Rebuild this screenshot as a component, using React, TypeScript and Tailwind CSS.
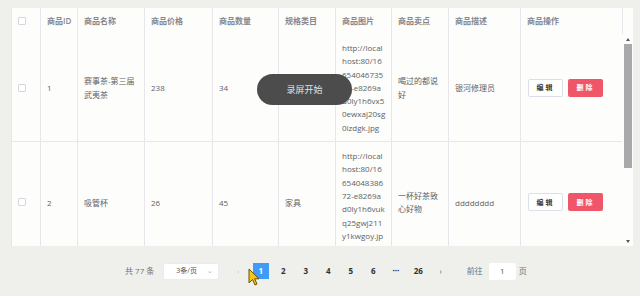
const font = { fontFamily: '"Open Sans", "Noto Sans CJK SC", sans-serif' }

const headers = ['商品ID', '商品名称', '商品价格', '商品数量', '规格类目', '商品图片', '商品卖点', '商品描述', '商品操作']

const rows = [
  {
    id: '1',
    name: ['赛事茶-第三届', '武夷茶'],
    price: '238',
    qty: '34',
    cat: '茶叶',
    img: ['http://local', 'host:80/16', '654046735', '01-e8269a', 'd0ly1h6vx5', '0ewxaj20sg', '0izdgk.jpg'],
    sell: ['喝过的都说', '好'],
    desc: '银河修理员',
  },
  {
    id: '2',
    name: ['吸管杯'],
    price: '26',
    qty: '45',
    cat: '家具',
    img: ['http://local', 'host:80/16', '654048386', '72-e8269a', 'd0ly1h6vuk', 'q25gwj211', 'y1kwgoy.jp', 'g'],
    sell: ['一杯好茶致', '心好物'],
    desc: 'dddddddd',
  },
]

function Checkbox() {
  return <span className="block w-[8px] h-[8px] border border-[#d6d8e0] rounded-[1px] bg-white" />
}

function Lines({ lines }: { lines: string[] }) {
  return (
    <div>
      {lines.map((l, i) => (
        <div key={i} className="whitespace-nowrap">{l}</div>
      ))}
    </div>
  )
}

const cell = 'flex items-center border-r border-[#e6e6ec] pl-[6px]'

export default function App() {
  const pages = ['1', '2', '3', '4', '5', '6', '···', '26']
  return (
    <div className="relative w-[640px] h-[296px] bg-[#efefec] overflow-hidden text-[8px] text-[#606266]" style={font}>
      {/* Table card */}
      <div className="ml-[11px] mr-[7px] mt-[8px] bg-[#fdfdfb] border-l border-[#e6e6ec]">
        {/* Header */}
        <div className="grid grid-cols-[29px_37px_67px_68px_66px_57px_56px_57px_72px_102px_11px] h-[26px] text-[#86888e] font-semibold">
          <div className={cell}><Checkbox /></div>
          {headers.map((h, i) => (
            <div key={h} className={`${cell} ${i === 0 ? 'pl-[4px]' : ''}`}>{h}</div>
          ))}
          <div />
        </div>

        {/* Body */}
        <div className="flex h-[212px]">
          <div className="w-[611px] overflow-hidden leading-[13.3px]">
            {rows.map((r) => (
              <div key={r.id} className="grid grid-cols-[29px_37px_67px_68px_66px_57px_56px_57px_72px_102px] border-b border-[#e6e6ec]">
                <div className={cell}><Checkbox /></div>
                <div className={`${cell} pl-[4px]`}>{r.id}</div>
                <div className={cell}><Lines lines={r.name} /></div>
                <div className={cell}>{r.price}</div>
                <div className={cell}>{r.qty}</div>
                <div className={cell}>{r.cat}</div>
                <div className={`${cell} py-[7px]`}><Lines lines={r.img} /></div>
                <div className={cell}><Lines lines={r.sell} /></div>
                <div className={cell}>{r.desc}</div>
                <div className={`${cell} gap-[5px] pl-[7px]`}>
                  <button className="w-[35px] h-[18px] border border-[#dcdfe6] rounded-[2px] bg-white text-[7px] font-bold text-[#3a3a3a] tracking-[2px]">编辑</button>
                  <button className="w-[35px] h-[18px] rounded-[2px] bg-[#f0566a] text-[7px] font-bold text-white tracking-[2px]">删除</button>
                </div>
              </div>
            ))}
          </div>
          {/* Scrollbar */}
          <div className="w-[11px] flex flex-col items-center pt-[4px]">
            <span className="w-0 h-0 border-l-[2.5px] border-r-[2.5px] border-b-[3px] border-l-transparent border-r-transparent border-b-[#555]" />
            <div className="mt-[3px] w-[8px] h-[124px] bg-[#a9a9ab]" />
            <div className="flex-1" />
            <span className="mb-[3px] w-0 h-0 border-l-[2.5px] border-r-[2.5px] border-t-[3px] border-l-transparent border-r-transparent border-t-[#555]" />
          </div>
        </div>
      </div>

      {/* Pagination */}
      <div className="h-[50px] flex items-center pl-[125px]">
        <span className="text-[#707276]">共 77 条</span>
        <div className="ml-[9px] w-[56px] h-[17px] bg-white rounded-[2px] border border-[#ececef] flex items-center pl-[12px] pr-[5px] text-[#555]">
          <span className="flex-1 text-[7px]">3条/页</span>
          <span className="text-[#b0b2b8] text-[7px]">⌄</span>
        </div>
        <div className="ml-[11px] flex items-center gap-[6.5px] font-bold text-[#303133]">
          <span className="w-[16px] text-center text-[#c0c4cc] font-normal">‹</span>
          {pages.map((p) => (
            <span
              key={p}
              className={`w-[16px] h-[16px] flex items-center justify-center ${p === '1' ? 'bg-[#3f9af8] text-white' : ''}`}
            >
              {p}
            </span>
          ))}
          <span className="w-[16px] text-center text-[#555] font-normal">›</span>
        </div>
        <span className="ml-[18px] text-[#707276]">前往</span>
        <div className="ml-[6px] w-[27px] h-[17px] bg-white rounded-[2px] flex items-center justify-center text-[#555]">1</div>
        <span className="ml-[3px] text-[#707276]">页</span>
      </div>

      {/* Screen recording overlay */}
      <div className="absolute left-[257px] top-[74px] w-[95px] h-[31px] rounded-full bg-[#4c4c4c] flex items-center justify-center text-[9px] text-[#e2e2e2]">
        录屏开始
      </div>

      {/* Mouse cursor */}
      <svg className="absolute left-[248px] top-[268px]" width="12" height="18" viewBox="0 0 12 18">
        <path d="M1 1 L1 15 L4.5 11.5 L7 17 L9 16 L6.6 10.8 L11 10.8 Z" fill="#f5c518" stroke="#6b5200" strokeWidth="1" strokeLinejoin="round" />
      </svg>
    </div>
  )
}
